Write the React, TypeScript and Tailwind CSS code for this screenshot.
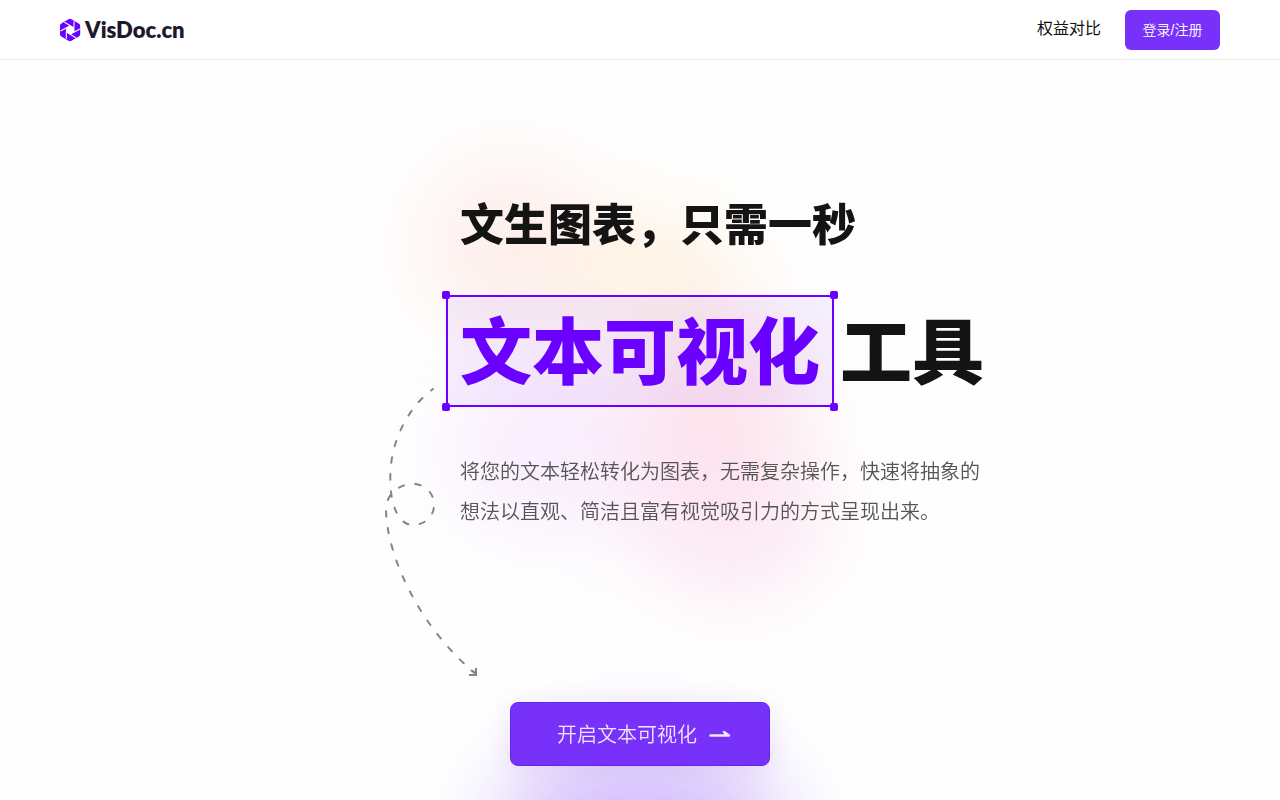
const handles = [
    '-top-1.5 -left-1.5',
    '-top-1.5 -right-1.5',
    '-bottom-1.5 -left-1.5',
    '-bottom-1.5 -right-1.5',
];

function Logo() {
    return (
        <a href="#" className="flex items-center gap-1 text-[#1d1a2f]">
            <svg width="21" height="24" viewBox="0 0 21 24" aria-hidden="true">
                <path
                    d="M8.500 1.200a3 3 0 0 1 3 0l7.200 4.200a3 3 0 0 1 1.500 2.600v8a3 3 0 0 1-1.500 2.600l-7.200 4.200a3 3 0 0 1-3 0l-7.200-4.200A3 3 0 0 1 0 16V8a3 3 0 0 1 1.300-2.600z"
                    fill="#6a00ff"
                />
                <path d="M10.200 7.800l3.700 2.100v4.200l-3.700 2.100-3.700-2.100V9.900z" fill="#fff" />
                {/* Shutter blades */}
                {[0, 60, 120, 180, 240, 300].map((angle) => (
                    <path
                        key={angle}
                        d="M13.900 9.900L4.500 4.200"
                        transform={`rotate(${angle} 10.2 12)`}
                        stroke="#fff"
                        strokeWidth="1.100"
                        fill="none"
                    />
                ))}
            </svg>
            <span className='font-["Lato",sans-serif] text-[22px] leading-6 font-extrabold'>VisDoc.cn</span>
        </a>
    );
}

function Header() {
    return (
        <header className="relative z-10 flex h-[60px] items-center justify-between border-b border-[#ebebeb] bg-white px-[60px]">
            <Logo />
            <nav className="flex items-center gap-6">
                <a href="#" className="pb-0.5 text-base text-[#111111]">权益对比</a>
                <button className="h-10 w-[95px] rounded-md bg-[#7731f9] text-sm font-[350] text-white">登录/注册</button>
            </nav>
        </header>
    );
}

function Glow() {
    return (
        <svg
            className="pointer-events-none absolute inset-0 size-full"
            viewBox="0 0 1280 740"
            preserveAspectRatio="xMidYMin slice"
            aria-hidden="true"
        >
            <defs>
                <filter id="soft" x="-100%" y="-100%" width="300%" height="300%" colorInterpolationFilters="sRGB">
                    <feGaussianBlur stdDeviation="42" />
                </filter>
            </defs>
            <g filter="url(#soft)">
                <ellipse cx="510" cy="185" rx="85" ry="85" fill="#ffdfd9" opacity="0.5" />
                <ellipse cx="650" cy="210" rx="90" ry="50" fill="#ffedd2" opacity="0.7" />
                <ellipse cx="560" cy="390" rx="110" ry="80" fill="#f6e2fd" opacity="0.6" />
                <ellipse cx="715" cy="340" rx="85" ry="80" fill="#fbd3dd" opacity="0.6" />
                <ellipse cx="730" cy="450" rx="95" ry="85" fill="#fcdcee" opacity="0.65" />
            </g>
            <ellipse cx="640" cy="775" rx="140" ry="90" fill="#c3a3fc" opacity="0.7" filter="url(#soft)" />
        </svg>
    );
}

function SwirlArrow() {
    return (
        <svg
            className="pointer-events-none absolute bottom-0 left-20 translate-y-1/2"
            width="100"
            height="300"
            viewBox="0 2 100 300"
            fill="none"
            stroke="#858585"
            strokeWidth="2"
            strokeLinecap="round"
            aria-hidden="true"
        >
            <path
                d="M53 9C28 27 8 64 10.500 104C11 126 19 145 33 145C45 145 54 136 54 125C54 113 45 104 33 104C19 104 6 114 6 130C7 178 41 249 96 294"
                strokeDasharray="5.500 11.400"
                strokeDashoffset="3"
            />
            <path d="M91 290l5 4M96 288v7h-7" strokeLinecap="butt" />
        </svg>
    );
}

function Hero() {
    return (
        <main className="relative min-h-[740px] overflow-hidden">
            <Glow />
            <div className="relative mx-auto w-full max-w-[680px] pt-[129px]">
                <div className="relative pl-40">
                    <h1 className='font-["Noto_Sans_CJK_SC",sans-serif] font-black whitespace-nowrap text-[#141414]'>
                        <span className="block text-[44px] leading-[66px]">文生图表，只需一秒</span>
                        <span className="mt-10 -ml-3.5 flex items-center gap-1.5 text-[72px] leading-[100px]">
                            <span className="relative border-2 border-[#6a00ff] bg-[#6a00ff]/6 px-3 pb-2 text-[#6a00ff]">
                                文本可视化
                                {handles.map((position) => (
                                    <span key={position} className={`absolute size-2 rounded-xs bg-[#6a00ff] ${position}`} />
                                ))}
                            </span>
                            <span className="pb-2">工具</span>
                        </span>
                    </h1>
                    <p className="mt-[45px] text-xl leading-10 font-[350] text-[#555555]">
                        将您的文本轻松转化为图表，无需复杂操作，快速将抽象的想法以直观、简洁且富有视觉吸引力的方式呈现出来。
                    </p>
                    <SwirlArrow />
                </div>
                <div className="mt-[170px] flex justify-center">
                    <button className='flex h-16 w-[260px] items-center justify-center gap-3 rounded-lg border border-[#6425e6] bg-[#7731f9] pl-2 font-["Noto_Sans_CJK_SC",sans-serif] text-xl font-[350] text-[#f0e6ff] shadow-[0_4px_24px_rgba(90,40,200,0.1)]'>
                        开启文本可视化
                        <svg width="22" height="8" viewBox="0 0 22 8" aria-hidden="true">
                            <path
                                d="M1.500 5.500H20L15 2"
                                fill="none"
                                stroke="currentColor"
                                strokeWidth="2.400"
                                strokeLinecap="round"
                                strokeLinejoin="round"
                            />
                            <path d="M15 2L20 5.500H15z" fill="currentColor" />
                        </svg>
                    </button>
                </div>
            </div>
        </main>
    );
}

export default function App() {
    return (
        <div className='min-h-screen bg-[#fefefe] font-["Liberation_Sans","Noto_Sans_CJK_SC",sans-serif]'>
            <Header />
            <Hero />
        </div>
    );
}
